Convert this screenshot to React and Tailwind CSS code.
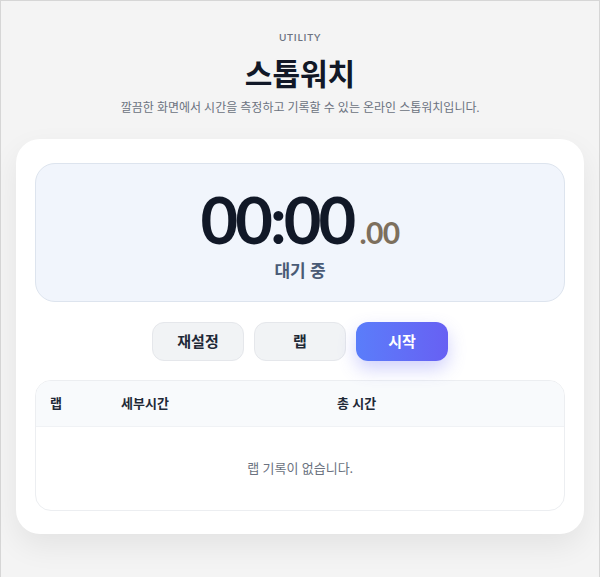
import React from "react";

export default function App() {
  const laps = [];

  return (
    <div className="min-h-[577px] border border-[#d6d6d6] bg-[#f4f4f4] font-['Lato','Noto_Sans_CJK_KR',sans-serif]">
      <div className="mx-auto w-[568px] pt-[29px] pb-[43px]">
        <header className="flex flex-col items-center">
          <p className="text-[10px] font-semibold tracking-[0.08em] text-[#6b7280]">UTILITY</p>
          <h1 className="mt-[8px] text-[30px] font-bold leading-[40px] text-[#111827]">스톱워치</h1>
          <p className="mt-[6px] text-[12px] text-[#6b7280]">깔끔한 화면에서 시간을 측정하고 기록할 수 있는 온라인 스톱워치입니다.</p>
        </header>

        <main className="mt-[22px] rounded-[24px] bg-white px-[19px] pt-[24px] pb-[23px] shadow-[0_12px_30px_rgba(0,0,0,0.07)]">
          <section className="flex h-[139px] flex-col items-center justify-center rounded-[20px] border border-[#dde4ee] bg-[#f1f5fc] pt-[6px]">
            <div className="flex items-baseline">
              <span className="text-[65px] font-bold leading-none tracking-[-0.045em] text-[#111827]">00:00</span>
              <span className="ml-[6px] text-[30px] font-bold leading-none tracking-[-0.02em] text-[#7d6f5d]">.00</span>
            </div>
            <p className="mt-[6px] text-[17px] font-semibold text-[#4a5b76]">대기 중</p>
          </section>

          <div className="mt-[20px] flex justify-center gap-[10px]">
            <button className="h-[39px] w-[92px] rounded-[12px] border border-[#e5e7eb] bg-[#f1f3f5] text-[15px] font-bold text-[#1f2937]">
              재설정
            </button>
            <button className="h-[39px] w-[92px] rounded-[12px] border border-[#e5e7eb] bg-[#f1f3f5] text-[15px] font-bold text-[#1f2937]">
              랩
            </button>
            <button className="h-[39px] w-[92px] rounded-[12px] bg-gradient-to-r from-[#5a7dfa] to-[#6760f3] text-[15px] font-bold text-white shadow-[0_8px_18px_rgba(99,102,241,0.3)]">
              시작
            </button>
          </div>

          <div className="mt-[19px] overflow-hidden rounded-[16px] border border-[#eceef1]">
            <div className="grid h-[46px] grid-cols-[71px_216px_1fr] items-center border-b border-[#f0f2f5] bg-[#f8fafc] px-[14px] text-[13px] font-semibold text-[#1f2937]">
              <span>랩</span>
              <span>세부시간</span>
              <span>총 시간</span>
            </div>
            {laps.length === 0 && (
              <div className="flex h-[83px] items-center justify-center text-[13px] text-[#6b7280]">랩 기록이 없습니다.</div>
            )}
          </div>
        </main>
      </div>
    </div>
  );
}
